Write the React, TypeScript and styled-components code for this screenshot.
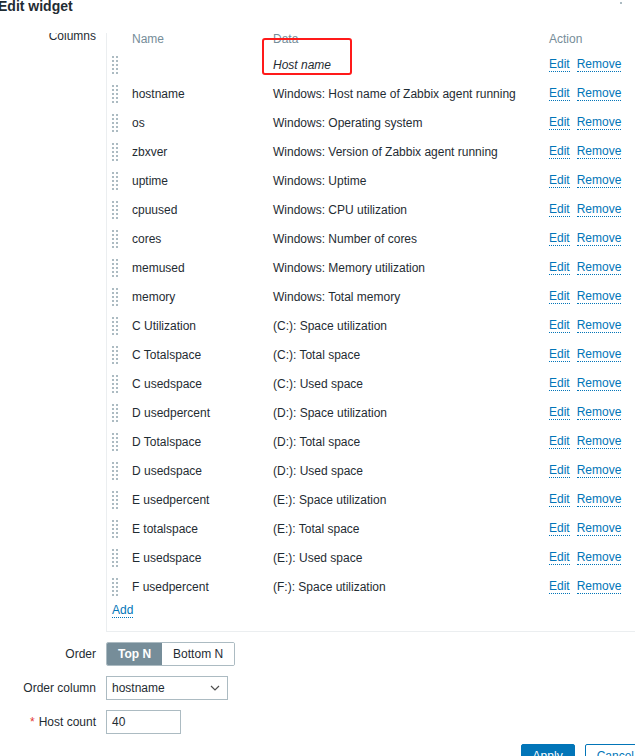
import styled, { createGlobalStyle } from 'styled-components';

const GlobalStyle = createGlobalStyle`
  html, body {
    margin: 0;
    padding: 0;
    overflow: hidden;
    background: #ffffff;
  }
  body {
    font-family: Arial, "Liberation Sans", sans-serif;
    font-size: 12px;
    color: #1f2c33;
  }
`;

interface Column {
  name: string;
  data: string;
  italic?: boolean;
  marked?: boolean;
}

const columns: Column[] = [
  { name: '', data: 'Host name', italic: true, marked: true },
  { name: 'hostname', data: 'Windows: Host name of Zabbix agent running' },
  { name: 'os', data: 'Windows: Operating system' },
  { name: 'zbxver', data: 'Windows: Version of Zabbix agent running' },
  { name: 'uptime', data: 'Windows: Uptime' },
  { name: 'cpuused', data: 'Windows: CPU utilization' },
  { name: 'cores', data: 'Windows: Number of cores' },
  { name: 'memused', data: 'Windows: Memory utilization' },
  { name: 'memory', data: 'Windows: Total memory' },
  { name: 'C Utilization', data: '(C:): Space utilization' },
  { name: 'C Totalspace', data: '(C:): Total space' },
  { name: 'C usedspace', data: '(C:): Used space' },
  { name: 'D usedpercent', data: '(D:): Space utilization' },
  { name: 'D Totalspace', data: '(D:): Total space' },
  { name: 'D usedspace', data: '(D:): Used space' },
  { name: 'E usedpercent', data: '(E:): Space utilization' },
  { name: 'E totalspace', data: '(E:): Total space' },
  { name: 'E usedspace', data: '(E:): Used space' },
  { name: 'F usedpercent', data: '(F:): Space utilization' },
];

const Dialog = styled.div`
  width: 656px;
  height: 756px;
  display: flex;
  flex-direction: column;
`;

const Header = styled.header`
  height: 33px;
  flex: none;
  display: flex;
  justify-content: space-between;
  align-items: flex-start;
`;

const Title = styled.h4`
  margin: -1px 0 0 -2px;
  font-size: 14px;
  line-height: 14px;
  font-weight: bold;
  color: #1f2c33;
`;

const Kebab = styled.div`
  margin: -2px 34px 0 0;
  display: flex;
  flex-direction: column;
  gap: 2px;
  span {
    width: 2px;
    height: 2px;
    background: #acbbc2;
  }
`;

const Body = styled.div`
  flex: 1;
  overflow: hidden;
`;

const Content = styled.div`
  margin-top: -9px;
`;

const FormGrid = styled.div`
  display: grid;
  grid-template-columns: 96px 1fr;
  column-gap: 10px;
  row-gap: 10px;
`;

const Label = styled.label<{ $top?: boolean }>`
  text-align: right;
  line-height: 14px;
  padding-top: ${(p) => (p.$top ? '5px' : '0')};
  align-self: ${(p) => (p.$top ? 'start' : 'center')};
  color: #1f2c33;
`;

const Asterisk = styled.span`
  color: #e33734;
  margin-right: 4px;
`;

const ColumnsBox = styled.div`
  border-left: 1px solid #ebeef0;
  border-bottom: 1px solid #ebeef0;
  padding: 0 0 11px 0;
`;

const Table = styled.div`
  display: grid;
  grid-template-columns: 25px 141px 276px auto;
`;

const HeadCell = styled.div`
  height: 26px;
  box-sizing: border-box;
  padding-top: 4px;
  display: flex;
  align-items: center;
  color: #768d99;
`;

const Cell = styled.div<{ $italic?: boolean }>`
  height: 29px;
  display: flex;
  align-items: center;
  position: relative;
  font-style: ${(p) => (p.$italic ? 'italic' : 'normal')};
  white-space: nowrap;
`;

const Handle = styled.div`
  margin-left: 5px;
  display: grid;
  grid-template-columns: 2px 2px;
  grid-auto-rows: 2px;
  gap: 2px;
  span {
    background: #acbbc2;
  }
`;

const Marker = styled.div`
  position: absolute;
  left: -11px;
  top: -12px;
  width: 86px;
  height: 33px;
  border: 2px solid #ff1a1a;
  border-radius: 3px;
  pointer-events: none;
`;

const Actions = styled.div`
  display: flex;
  gap: 7px;
`;

const Link = styled.a`
  color: #0275b8;
  text-decoration: none;
  border-bottom: 1px dotted #0275b8;
  line-height: 14px;
  cursor: pointer;
`;

const AddRow = styled.div`
  padding-left: 5px;
  height: 19px;
  display: flex;
  align-items: center;
`;

const Segmented = styled.div`
  display: flex;
  width: fit-content;
  height: 24px;
  box-sizing: border-box;
  border: 1px solid #acbbc2;
  border-radius: 2px;
  overflow: hidden;
`;

const SegButton = styled.button<{ $active?: boolean }>`
  font: inherit;
  font-size: 12px;
  border: none;
  margin: 0;
  padding: 0 11px;
  background: ${(p) => (p.$active ? '#768d99' : '#ffffff')};
  color: ${(p) => (p.$active ? '#ffffff' : '#1f2c33')};
  font-weight: ${(p) => (p.$active ? 'bold' : 'normal')};
`;

const Select = styled.div`
  width: 122px;
  height: 24px;
  box-sizing: border-box;
  border: 1px solid #acbbc2;
  display: flex;
  align-items: center;
  justify-content: space-between;
  padding: 0 6px 0 5px;
`;

const Input = styled.div`
  width: 75px;
  height: 24px;
  box-sizing: border-box;
  border: 1px solid #acbbc2;
  display: flex;
  align-items: center;
  padding: 0 5px;
`;

const Footer = styled.div`
  display: flex;
  justify-content: flex-end;
  gap: 10px;
  padding: 10px 10px 0 0;
`;

const Button = styled.button<{ $primary?: boolean }>`
  font: inherit;
  font-size: 12px;
  height: 24px;
  padding: 0 11px;
  border-radius: 2px;
  border: 1px solid #0275b8;
  background: ${(p) => (p.$primary ? '#0275b8' : '#ffffff')};
  color: ${(p) => (p.$primary ? '#ffffff' : '#0275b8')};
`;

function DragHandle() {
  return (
    <Handle>
      {Array.from({ length: 10 }).map((_, i) => (
        <span key={i} />
      ))}
    </Handle>
  );
}

export default function App() {
  return (
    <>
      <GlobalStyle />
      <Dialog>
        <Header>
          <Title>Edit widget</Title>
          <Kebab>
            <span />
            <span />
          </Kebab>
        </Header>
        <Body>
          <Content>
            <FormGrid>
              <Label $top>Columns</Label>
              <ColumnsBox>
                <Table>
                  <HeadCell />
                  <HeadCell>Name</HeadCell>
                  <HeadCell>Data</HeadCell>
                  <HeadCell>Action</HeadCell>
                  {columns.map((c, i) => (
                    <div key={i} style={{ display: 'contents' }}>
                      <Cell>
                        <DragHandle />
                      </Cell>
                      <Cell>{c.name}</Cell>
                      <Cell $italic={c.italic}>
                        {c.data}
                        {c.marked && <Marker />}
                      </Cell>
                      <Cell>
                        <Actions>
                          <Link>Edit</Link>
                          <Link>Remove</Link>
                        </Actions>
                      </Cell>
                    </div>
                  ))}
                </Table>
                <AddRow>
                  <Link>Add</Link>
                </AddRow>
              </ColumnsBox>

              <Label>Order</Label>
              <Segmented>
                <SegButton $active>Top N</SegButton>
                <SegButton>Bottom N</SegButton>
              </Segmented>

              <Label>Order column</Label>
              <Select>
                <span>hostname</span>
                <svg width="12" height="12" viewBox="0 0 12 12" fill="none">
                  <path d="M2 4l4 4 4-4" stroke="#4f4f4f" strokeWidth="1.2" />
                </svg>
              </Select>

              <Label>
                <Asterisk>*</Asterisk>Host count
              </Label>
              <Input>40</Input>
            </FormGrid>
            <Footer>
              <Button $primary>Apply</Button>
              <Button>Cancel</Button>
            </Footer>
          </Content>
        </Body>
      </Dialog>
    </>
  );
}
